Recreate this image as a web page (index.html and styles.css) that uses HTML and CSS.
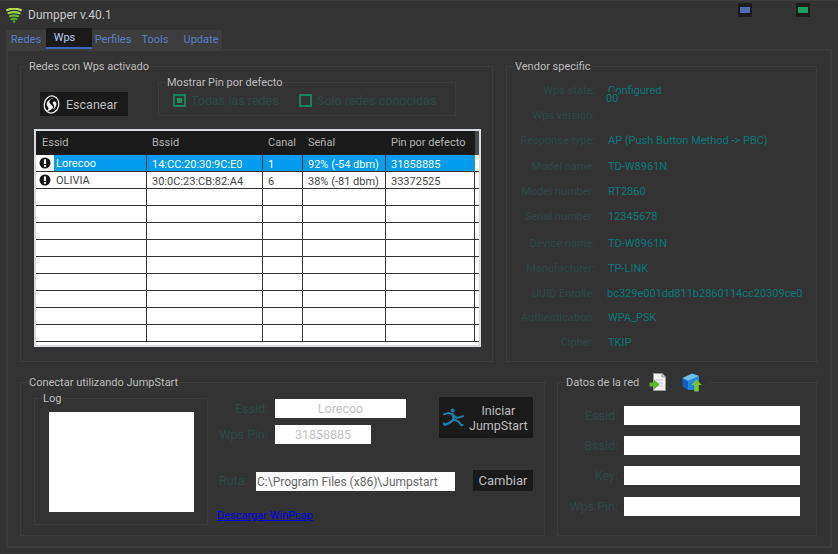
FILE: index.html
```html
<!DOCTYPE html>
<html lang="es">
<head>
<meta charset="utf-8">
<title>Dumpper v.40.1</title>
<link rel="stylesheet" href="styles.css">
</head>
<body>
<svg class="defs" width="0" height="0" aria-hidden="true">
  <defs>
    <symbol id="info" viewBox="0 0 12 12">
      <circle cx="6" cy="6" r="5.5" fill="#111"/>
      <rect x="4.9" y="2.4" width="2.2" height="4.6" fill="#fff"/>
      <rect x="4.9" y="7.9" width="2.2" height="1.9" fill="#fff"/>
    </symbol>
  </defs>
</svg>
<div class="window">
  <header class="titlebar">
    <svg class="logo" width="16" height="15" viewBox="0 0 16 15">
      <g fill="none" stroke-linecap="round" stroke-width="2.2">
        <path d="M1.200 2Q8 -0.600 14.800 2" stroke="#b4e050"/>
        <path d="M2.500 5.200Q8 3.200 13.500 5.200" stroke="#9ad83c"/>
        <path d="M4 8.200Q8 6.800 12 8.200" stroke="#72bf2a"/>
        <path d="M5.600 11Q8 10.100 10.400 11" stroke="#56a820"/>
      </g>
      <circle cx="8" cy="13.500" r="1.400" fill="#4b9c1c"/>
    </svg>
    <span class="app-title">Dumpper v.40.1</span>
    <div class="win-btns">
      <span class="win-btn"><i class="swatch-blue"></i></span>
      <span class="win-btn"><i class="swatch-green"></i></span>
    </div>
  </header>
  <nav class="tabs">
    <span class="tab tab-redes">Redes</span>
    <span class="tab tab-wps">Wps</span>
    <span class="tab tab-perfiles">Perfiles</span>
    <span class="tab tab-tools">Tools</span>
    <span class="tab tab-update">Update</span>
  </nav>
  <main class="panel">
    <div class="row-top">
      <fieldset class="group group-redes">
        <legend>Redes con Wps activado</legend>
        <div class="toolbar">
          <button class="btn btn-scan" type="button">
            <svg width="17" height="19" viewBox="0 0 17 19">
              <ellipse cx="8.5" cy="9.5" rx="7.2" ry="8.6" fill="#111" stroke="#eee" stroke-width="1.3" transform="rotate(12 8.5 9.5)"/>
              <path d="M12.5 2.5C8 3.2 5 6 7 8.5S11.5 11.5 9 14C7.5 15.500 5.500 16 3.800 16C6 14 5.800 12.800 4.500 11.500C2 9 4.500 3.500 12.500 2.500Z" fill="#eee"/>
              <path d="M10.500 6.500C13.500 6 14 8.500 13 11C12.300 12.500 11 14 9.800 14.600C11.500 12.500 11.500 10.500 10.500 9.500C9.500 8.500 9.500 7 10.500 6.500Z" fill="#eee"/>
            </svg>
            <span>Escanear</span>
          </button>
          <fieldset class="group group-pin">
            <legend>Mostrar Pin por defecto</legend>
            <div class="options">
              <span class="check on"><i></i></span><span class="opt-label opt-first">Todas las redes</span>
              <span class="check"></span><span class="opt-label">Solo redes conocidas</span>
            </div>
          </fieldset>
        </div>
        <div class="table-frame">
          <table class="grid">
            <colgroup><col class="c1"><col class="c2"><col class="c3"><col class="c4"><col class="c5"><col></colgroup>
            <thead>
              <tr><th>Essid</th><th>Bssid</th><th>Canal</th><th>Señal</th><th>Pin por defecto</th><th class="th-end"></th></tr>
            </thead>
            <tbody>
              <tr class="selected">
                <td class="essid"><span class="essid-icon"><svg width="12" height="12"><use href="#info"/></svg></span><span class="essid-name">Lorecoo</span></td>
                <td>14:CC:20:30:9C:E0</td><td>1</td><td>92% (-54 dbm)</td><td class="last">31858885</td><td class="end"></td>
              </tr>
              <tr>
                <td class="essid"><span class="essid-icon"><svg width="12" height="12"><use href="#info"/></svg></span><span class="essid-name">OLIVIA</span></td>
                <td>30:0C:23:CB:82:A4</td><td>6</td><td>38% (-81 dbm)</td><td>33372525</td><td class="end"></td>
              </tr>
              <tr><td></td><td></td><td></td><td></td><td></td><td class="end"></td></tr>
              <tr><td></td><td></td><td></td><td></td><td></td><td class="end"></td></tr>
              <tr><td></td><td></td><td></td><td></td><td></td><td class="end"></td></tr>
              <tr><td></td><td></td><td></td><td></td><td></td><td class="end"></td></tr>
              <tr><td></td><td></td><td></td><td></td><td></td><td class="end"></td></tr>
              <tr><td></td><td></td><td></td><td></td><td></td><td class="end"></td></tr>
              <tr><td></td><td></td><td></td><td></td><td></td><td class="end"></td></tr>
              <tr><td></td><td></td><td></td><td></td><td></td><td class="end"></td></tr>
              <tr><td></td><td></td><td></td><td></td><td></td><td class="end"></td></tr>
            </tbody>
          </table>
        </div>
      </fieldset>
      <fieldset class="group group-vendor">
        <legend>Vendor specific</legend>
        <dl class="vendor">
          <div class="v-row"><dt>Wps state:</dt><dd>Configured</dd><span class="v-overlay">00</span></div>
          <div class="v-row"><dt>Wps version:</dt><dd></dd></div>
          <div class="v-row v-26"><dt>Response type:</dt><dd>AP (Push Button Method -&gt; PBC)</dd></div>
          <div class="v-row"><dt>Model name:</dt><dd>TD-W8961N</dd></div>
          <div class="v-row"><dt>Model number:</dt><dd>RT2860</dd></div>
          <div class="v-row v-27"><dt>Serial number:</dt><dd>12345678</dd></div>
          <div class="v-row"><dt>Device name:</dt><dd>TD-W8961N</dd></div>
          <div class="v-row"><dt>Manufacturer:</dt><dd>TP-LINK</dd></div>
          <div class="v-row v-24"><dt>UUID Enrolle:</dt><dd class="v-tight">bc329e001dd811b2860114cc20309ce0</dd></div>
          <div class="v-row"><dt>Authentication:</dt><dd>WPA_PSK</dd></div>
          <div class="v-row"><dt>Cipher:</dt><dd>TKIP</dd></div>
        </dl>
      </fieldset>
    </div>
    <div class="row-bottom">
      <fieldset class="group group-jump">
        <legend>Conectar utilizando JumpStart</legend>
        <div class="jump-body">
          <fieldset class="group group-log">
            <legend>Log</legend>
            <div class="log-box"></div>
          </fieldset>
          <div class="jump-form">
            <div class="jump-top">
              <div class="jump-fields">
                <div class="field"><label class="lbl lbl-w51">Essid:</label><input class="inp inp-essid" readonly value="Lorecoo"></div>
                <div class="field"><label class="lbl lbl-w51">Wps Pin:</label><input class="inp inp-pin" readonly value="31858885"></div>
              </div>
              <button class="btn btn-start" type="button">
                <svg width="22" height="20" viewBox="0 0 24 21">
                  <g fill="none" stroke="#1c7fb0" stroke-linecap="round" stroke-linejoin="round">
                    <path d="M1 6.500L6 5L10.500 6.500L15 10.500L22 8.500" stroke-width="2"/>
                    <path d="M10.500 6.500L12 12L7.500 15.500L2 18L.8 16.500" stroke-width="2.600"/>
                    <path d="M12 12L17 14.500L20 18.500L21.500 18" stroke-width="2.200"/>
                  </g>
                  <circle cx="10.500" cy="2.200" r="2.200" fill="#1c7fb0"/>
                </svg>
                <span class="start-label">Iniciar<br>JumpStart</span>
              </button>
            </div>
            <div class="jump-path">
              <label class="lbl lbl-ruta">Ruta:</label>
              <input class="inp inp-path" readonly value="C:\Program Files (x86)\Jumpstart">
              <button class="btn btn-change" type="button">Cambiar</button>
            </div>
            <a class="link" href="#">Descargar WinPcap</a>
          </div>
        </div>
      </fieldset>
      <fieldset class="group group-datos">
        <legend class="legend-icons">
          <span>Datos de la red</span>
          <svg class="ico-doc" width="18" height="19" viewBox="0 0 18 19">
            <path d="M4.500 .5H13L16.500 4V17.500H4.500Z" fill="#f2f2f2" stroke="#9a9a9a"/>
            <path d="M13 .5V4H16.500" fill="#d0d0d0" stroke="#9a9a9a"/>
            <path d="M7 7H14M7 10H14M8 13H14" stroke="#c4c4c4"/>
            <path d="M.5 9.500H5V6.500L10.500 11.500L5 16.500V13.500H.5Z" fill="#5cb52a"/>
          </svg>
          <svg class="ico-box" width="20" height="19" viewBox="0 0 20 19">
            <path d="M.5 5L6 8V17L.5 13.500Z" fill="#1161c4"/>
            <path d="M6 8L17 3V11L13 17H6Z" fill="#1f86e6"/>
            <path d="M.5 5L10 .5L17 3L6 8Z" fill="#6cc0f5"/>
            <path d="M14.500 6.500L19.800 12H16.800V18.500H12.200V12H9.200Z" fill="#76c82a"/>
          </svg>
        </legend>
        <div class="datos-body">
          <div class="field-d"><label class="lbl lbl-w60">Essid:</label><input class="inp inp-datos" readonly></div>
          <div class="field-d"><label class="lbl lbl-w60">Bssid:</label><input class="inp inp-datos" readonly></div>
          <div class="field-d field-d-wide"><label class="lbl lbl-w60">Key:</label><input class="inp inp-datos" readonly></div>
          <div class="field-d"><label class="lbl lbl-w60">Wps Pin:</label><input class="inp inp-datos" readonly></div>
        </div>
      </fieldset>
    </div>
  </main>
</div>
</body>
</html>
```

FILE: styles.css
```css
* { box-sizing: border-box; }
html, body { margin: 0; padding: 0; }
body { width: 838px; height: 554px; overflow: hidden; background: #333; font-family: Roboto, "Liberation Sans", sans-serif; font-size: 11px; color: #bdbdbd; }
.defs { display: block; height: 0; }
.window { width: 838px; height: 554px; background: #333; border-top: 1px solid #3e3e3e; }

.titlebar { height: 27px; display: flex; align-items: center; padding-left: 6px; }
.logo { margin-top: 1px; }
.app-title { margin-left: 6px; font-size: 12px; color: #c8c8c8; }
.win-btns { margin-left: auto; margin-right: 28px; display: flex; gap: 44px; align-self: flex-start; margin-top: 2px; }
.win-btn { width: 14px; height: 14px; background: #1c1c1c; display: flex; align-items: center; justify-content: center; }
.win-btn i { display: block; width: 10px; height: 6px; }
.swatch-blue { background: #4d6cb4; }
.swatch-green { background: #14a05e; }

.tabs { display: flex; height: 21px; margin-left: 6px; align-items: flex-end; }
.tab { height: 19px; background: #3d3d3d; color: #5c7fc4; display: flex; align-items: center; justify-content: center; font-size: 11px; }
.tab-redes { width: 40px; }
.tab-wps { width: 46px; height: 21px; background: #1a1a1a; color: #b9c8ea; border-bottom: 2px solid #3f66b4; padding: 0 9px 1px 0; }
.tab-perfiles { width: 42px; }
.tab-tools { width: 42px; }
.tab-update { width: 46px; padding-left: 4px; }

.panel { margin: 0 6px; height: 499px; border: 2px solid #3d3d3d; padding: 7px 0 0 12px; display: flex; flex-direction: column; gap: 12px; }
.row-top { display: flex; gap: 13px; }
.row-bottom { display: flex; gap: 12px; }

.group { margin: 0; padding: 0; border: 1px solid #3d3d3d; min-width: 0; }
.group legend { height: 16px; padding: 1px 1px 0; margin-left: 7px; line-height: 16px; color: #bdbdbd; font-size: 11px; white-space: nowrap; }

.group-redes { width: 473px; height: 304px; }
.toolbar { display: flex; align-items: flex-end; height: 42px; margin: 0 0 13px 19px; gap: 30px; }
.btn { background: #1a1a1a; border: 0; padding: 0; color: #bdbdbd; font: inherit; display: flex; align-items: center; }
.btn-scan { width: 88px; height: 24px; padding-left: 3px; gap: 6px; font-size: 12.500px; }
.group-pin { width: 298px; height: 42px; }
.group-pin legend { margin-left: 7px; }
.options { display: flex; align-items: center; height: 13px; margin: 4px 0 0 14px; color: #2e4a48; font-size: 12.500px; }
.check { width: 13px; height: 13px; border: 2px solid #14855a; display: flex; align-items: center; justify-content: center; flex: none; }
.check i { display: block; width: 5px; height: 5px; background: #14915a; }
.opt-label { margin-left: 5px; }
.opt-first { width: 108px; }

.table-frame { width: 447px; height: 218px; margin-left: 13px; border: 2px solid #d8dce0; background: #fff; overflow: hidden; }
.grid { width: 100%; table-layout: fixed; border-collapse: separate; border-spacing: 0; font-size: 11px; color: #444; }
.c1 { width: 111px; }
.c2 { width: 116px; }
.c3 { width: 40px; }
.c4 { width: 83px; }
.c5 { width: 89px; }
.grid th { height: 24px; background: #1a1a1a; color: #b4b4b4; font-weight: 400; text-align: left; padding: 0 0 2px 5px; }
.grid th:first-child { padding-left: 6px; }
.grid .th-end { background: #4a4a4a; padding: 0; }
.grid td { height: 17px; padding: 2px 0 0 5px; line-height: 13px; border-right: 1px solid #333; border-bottom: 1px solid #333; white-space: nowrap; }
.grid .end { border-right: 0; padding: 0; }
.grid .essid { padding: 0; }
.essid-icon { display: inline-flex; width: 18px; height: 16px; align-items: center; justify-content: center; vertical-align: top; }
.essid-name { display: inline-block; height: 16px; line-height: 17px; padding-left: 2px; vertical-align: top; }
.selected td { background: #009cf0; color: #fff; }
.selected .essid { background: #fff; }
.selected .essid-name { background: #009cf0; width: 92px; }
.selected .end { background: #fff; }
.selected .last { border-right: 1px dotted #d8602c; }

.group-vendor { width: 311px; height: 304px; }
.vendor { margin: 4px 0 0; }
.v-row { position: relative; display: grid; grid-template-columns: 88px 1fr; column-gap: 13px; height: 25px; line-height: 25px; }
.v-26 { height: 26px; }
.v-27 { height: 27px; }
.v-24 { height: 24px; }
.v-row dt { text-align: right; color: #2e4a48; white-space: nowrap; }
.v-row dd { margin: 0; color: #0a7a7a; white-space: nowrap; }
.v-tight { margin-left: -1px !important; }
.v-overlay { position: absolute; left: 99px; top: 14px; color: #0a7a7a; background: #333; line-height: 13px; height: 13px; }

.group-jump { width: 525px; height: 162px; }
.jump-body { display: flex; padding-left: 13px; }
.group-log { width: 174px; height: 135px; flex: none; }
.group-log .log-box { width: 145px; height: 100px; background: #fff; margin: 6px 0 0 14px; }
.jump-form { margin-left: 9px; padding-top: 7px; display: flex; flex-direction: column; align-items: flex-start; }
.jump-top { display: flex; height: 41px; }
.jump-fields { width: 222px; padding-top: 2px; display: flex; flex-direction: column; gap: 7px; }
.field { display: flex; gap: 7px; height: 19px; align-items: center; }
.lbl { color: #2e4a48; font-size: 12.500px; text-align: right; white-space: nowrap; flex: none; }
.lbl-w51 { width: 51px; }
.lbl-w60 { width: 60px; }
.lbl-ruta { width: 39px; text-align: left; padding-left: 2px; }
.inp { display: block; height: 19px; border: 0; padding: 0; margin: 0; background: #fff; font: inherit; font-size: 12.500px; outline: none; }
.inp-essid { width: 131px; text-align: center; color: #c4c4c4; }
.inp-pin { width: 96px; text-align: center; color: #c4c4c4; }
.btn-start { width: 94px; height: 41px; padding-left: 4px; gap: 4px; font-size: 12.500px; }
.start-label { line-height: 15px; text-align: center; }
.jump-path { display: flex; align-items: center; margin-top: 32px; height: 21px; }
.inp-path { width: 199px; margin-top: 2px; padding-left: 1px; color: #666; font-size: 12px; }
.btn-change { width: 60px; height: 21px; margin-left: 18px; justify-content: center; font-size: 13px; }
.link { margin-top: 18px; color: #0000ee; font-size: 11px; line-height: 14px; text-decoration: underline; }

.group-datos { width: 260px; height: 162px; }
.group legend.legend-icons { display: flex; align-items: center; gap: 10px; margin-left: 7px; padding: 0 8px 0 1px; }
.legend-icons span { padding-top: 1px; }
.ico-box { margin-left: 5px; }
.datos-body { padding-top: 16px; }
.field-d { display: flex; gap: 6px; align-items: center; height: 19px; margin-bottom: 11px; }
.field-d-wide { margin-bottom: 12px; }
.inp-datos { width: 176px; }
```
